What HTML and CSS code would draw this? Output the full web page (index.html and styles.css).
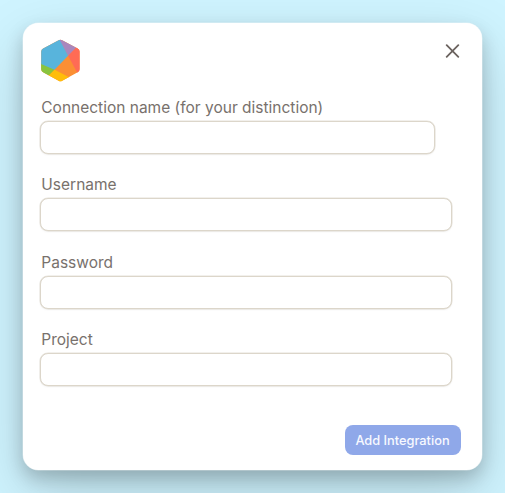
FILE: index.html
```html
<!DOCTYPE html>
<html lang="en">
<head>
<meta charset="utf-8">
<title>Add Integration</title>
<link rel="stylesheet" href="styles.css">
</head>
<body>
<form class="card">
  <header class="header">
    <svg class="logo" width="40" height="44" viewBox="0 0 40 44" aria-hidden="true">
      <defs><clipPath id="hex"><path d="M17.6 1.2Q19.4.3 21.2 1.2L36.7 9.5Q38.6 10.6 38.6 12.6V30.2Q38.6 32.2 36.7 33.3L21.2 41.8Q19.4 42.8 17.6 41.8L2.1 33.3Q.2 32.2 .2 30.2V12.6Q.2 10.6 2.1 9.5Z"/></clipPath></defs>
      <g clip-path="url(#hex)">
        <path fill="#fb8f34" d="M0 0H40V44H0Z"/>
        <path fill="#ff6b55" d="M27.1 16.8L37 6H40V36H37.5Z"/>
        <path fill="#a987bd" d="M17 0H40V3.5L27.1 16.8Z"/>
        <path fill="#ffbd0a" d="M13.2 30.5L31.5 40V44H0Z"/>
        <path fill="#88c43f" d="M0 24L13.6 30.4L4 40H0Z"/>
        <path fill="#58b4dc" d="M0 0H18.2L27.1 16.8L13.5 30.8L0 24.9Z"/>
      </g>
    </svg>
    <button class="close" type="button" aria-label="Close">
      <svg width="15" height="14" viewBox="0 0 15 14"><path d="M1.7 1.2L13.3 12.8M13.3 1.2L1.7 12.8"/></svg>
    </button>
  </header>
  <div class="fields">
    <label class="field field-short">Connection name (for your distinction)<input type="text"></label>
    <label class="field">Username<input type="text"></label>
    <label class="field">Password<input type="password"></label>
    <label class="field">Project<input type="text"></label>
  </div>
  <footer class="footer"><button class="submit" type="button">Add Integration</button></footer>
</form>
</body>
</html>
```
FILE: styles.css
```css
* { box-sizing: border-box; }
html { height: 100%; overflow: hidden; }
body {
  margin: 0;
  height: 493px;
  padding: 23px;
  overflow: hidden;
  background: #cff4ff;
  font-family: Inter, sans-serif;
}
.card {
  width: 459px;
  height: 447px;
  padding: 16px 21px 15px 17px;
  display: flex;
  flex-direction: column;
  background: #fff;
  border-radius: 15.5px;
  box-shadow: 0 0 0 .5px rgba(255, 255, 255, .5), 0 8px 18px rgba(0, 0, 0, .2), 0 22px 60px rgba(0, 0, 0, .17);
}
.header { display: flex; justify-content: space-between; height: 56.6px; }
.logo { margin-left: 1px; }
.close {
  width: 15px;
  height: 14px;
  margin: 5px 1px 0 0;
  padding: 0;
  border: 0;
  background: none;
}
.close svg { display: block; fill: none; stroke: #6b635f; stroke-width: 1.8; stroke-linecap: round; }
.fields { display: flex; flex-direction: column; gap: 19.3px; }
.field {
  display: flex;
  flex-direction: column;
  width: 412px;
  color: #78716c;
  font-size: 15.5px;
  line-height: 24px;
  text-indent: 1.3px;
}
.field-short { width: 395px; }
.field input {
  height: 33.2px;
  margin: 1px 0 0;
  border: 1px solid #dcd6ca;
  border-radius: 8px;
  background: #fff;
  box-shadow: 0 0 0 .5px rgba(220, 214, 202, .7), 0 1px 2px rgba(0, 0, 0, .05);
}
.footer { display: flex; justify-content: flex-end; margin-top: auto; }
.submit {
  width: 116px;
  height: 30px;
  padding: 1px 1px 0 0;
  border: 0;
  border-radius: 8px;
  background: #8fa8e9;
  color: #f7f9ff;
  font: 500 12.8px/29px Inter, sans-serif;
}
```
